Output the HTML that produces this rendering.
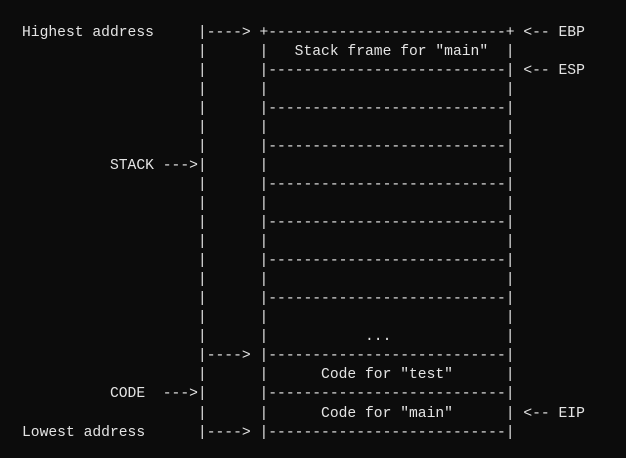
<!DOCTYPE html>
<html><head><meta charset="utf-8"><style>
html,body{margin:0;padding:0;background:#0c0c0c;width:626px;height:458px;overflow:hidden}
div{position:absolute;left:22px;margin:0;white-space:pre;font-family:"Liberation Mono",monospace;font-size:14.67px;line-height:19px;color:#e4e4e4}
</style></head><body>
<div style="top:23.5px">Highest address     |----&gt; +---------------------------+ &lt;-- EBP</div>
<div style="top:42.5px">                    |      |   Stack frame for "main"  |</div>
<div style="top:61.6px">                    |      |---------------------------| &lt;-- ESP</div>
<div style="top:80.6px">                    |      |                           |</div>
<div style="top:99.7px">                    |      |---------------------------|</div>
<div style="top:118.7px">                    |      |                           |</div>
<div style="top:137.8px">                    |      |---------------------------|</div>
<div style="top:156.8px">          STACK ---&gt;|      |                           |</div>
<div style="top:175.9px">                    |      |---------------------------|</div>
<div style="top:194.9px">                    |      |                           |</div>
<div style="top:214px">                    |      |---------------------------|</div>
<div style="top:233px">                    |      |                           |</div>
<div style="top:252.1px">                    |      |---------------------------|</div>
<div style="top:271.1px">                    |      |                           |</div>
<div style="top:290.2px">                    |      |---------------------------|</div>
<div style="top:309.2px">                    |      |                           |</div>
<div style="top:328.3px">                    |      |           ...             |</div>
<div style="top:347.3px">                    |----&gt; |---------------------------|</div>
<div style="top:366.4px">                    |      |      Code for "test"      |</div>
<div style="top:385.4px">          CODE  ---&gt;|      |---------------------------|</div>
<div style="top:404.5px">                    |      |      Code for "main"      | &lt;-- EIP</div>
<div style="top:423.5px">Lowest address      |----&gt; |---------------------------|</div>
</body></html>
